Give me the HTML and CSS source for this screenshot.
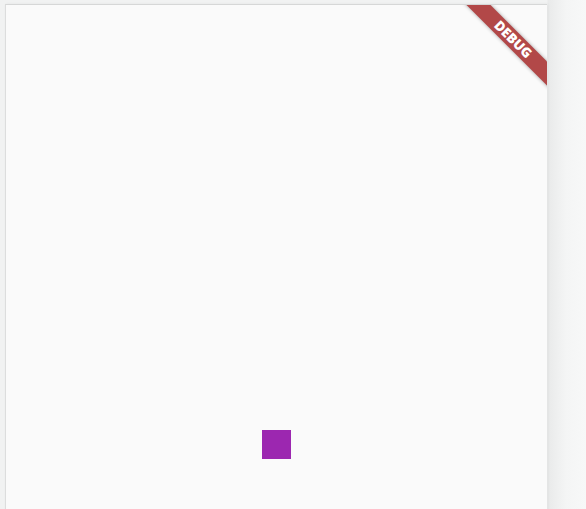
FILE: index.html
```html
<!DOCTYPE html>
<html>
<head>
<meta charset="utf-8">
<link rel="stylesheet" href="styles.css">
</head>
<body>
<div class="stage">
  <div class="panel">
    <div class="square"></div>
    <div class="banner"><span class="banner-text">DEBUG</span></div>
  </div>
</div>
</body>
</html>
```

FILE: styles.css
```css
html, body {
  margin: 0;
  padding: 0;
  height: 100%;
  overflow: hidden;
}
body {
  background: linear-gradient(to right, #f1f2f2 0px, #f1f2f2 547px, #e9eaea 548px, #f4f5f5 566px, #f7f8f8 586px);
  font-family: "Open Sans", "DejaVu Sans", sans-serif;
}
.stage {
  padding: 4px 0 0 5px;
  height: 100%;
  box-sizing: border-box;
}
.panel {
  position: relative;
  width: 542px;
  height: 520px;
  background: #fafafa;
  border-top: 1px solid #d6d7d7;
  border-left: 1px solid #dcdddd;
  box-sizing: border-box;
  overflow: hidden;
  box-shadow: 1px 0 3px rgba(0, 0, 0, 0.06);
  display: flex;
  flex-direction: column;
}
.square {
  width: 29px;
  height: 29px;
  margin: 425px 0 0 256px;
  background: #9c27b0;
}
.banner {
  position: absolute;
  top: 26px;
  right: -25.5px;
  width: 120px;
  height: 17px;
  background: #b24848;
  transform: rotate(45deg);
  display: flex;
  align-items: center;
  justify-content: center;
  box-shadow: 0 0 4px rgba(0, 0, 0, 0.35);
}
.banner-text {
  color: #ffffff;
  font-weight: 800;
  font-size: 13.5px;
  line-height: 1;
  letter-spacing: 0;
}
```
